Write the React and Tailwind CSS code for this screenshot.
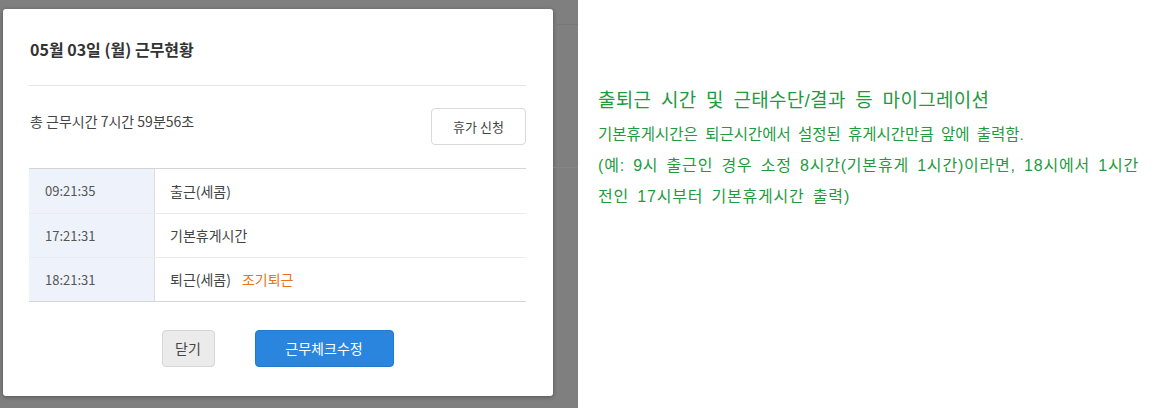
import React from "react";

const rows = [
  { time: "09:21:35", label: "출근(세콤)" },
  { time: "17:21:31", label: "기본휴게시간" },
  { time: "18:21:31", label: "퇴근(세콤)", note: "조기퇴근" },
];

function WorkModal() {
  return (
    <div className="w-[550px] h-[387px] bg-white rounded-[3px] shadow-[0_1px_4px_rgba(0,0,0,0.35)] pl-[26px] pr-[27px] pt-[29px]">
      <h2 className="pl-[1px] text-[16px] leading-[22px] font-bold text-[#333]">05월 03일 (월) 근무현황</h2>
      <div className="mt-[25px] border-t border-[#dfe5ec]" />

      <div className="mt-[22px] flex items-start justify-between">
        <p className="mt-[3px] pl-[1px] text-[14px] leading-[20px] text-[#444]">총 근무시간 7시간 59분56초</p>
        <button className="h-[37px] w-[95px] rounded-[4px] border border-[#d9d9d9] bg-white text-[13px] text-[#444]">
          휴가 신청
        </button>
      </div>

      <div className="mt-[23px] border-t border-b border-[#d4d4d4]">
        {rows.map((r, i) => (
          <div key={r.time} className={`flex h-[44px] ${i > 0 ? "border-t border-[#ececec]" : ""}`}>
            <div className="w-[126px] shrink-0 bg-[#eef3fb] border-r border-[#dcdcdc] flex items-center pl-[16px] text-[13px] text-[#555]">
              {r.time}
            </div>
            <div className="flex items-center pl-[15px] text-[14px] text-[#444]">
              {r.label}
              {r.note && <span className="ml-[11px] text-[#e8731a]">{r.note}</span>}
            </div>
          </div>
        ))}
      </div>

      <div className="mt-[28px] flex justify-center gap-[40px]">
        <button className="h-[37px] w-[53px] rounded-[4px] border border-[#d6d6d6] bg-[#ebebeb] text-[14px] text-[#444]">
          닫기
        </button>
        <button className="h-[37px] w-[139px] rounded-[4px] border border-[#2178cc] bg-[#2a85df] text-[14px] text-white">
          근무체크수정
        </button>
      </div>
    </div>
  );
}

export default function App() {
  return (
    <div
      className="w-[1167px] h-[408px] flex bg-white"
      style={{ fontFamily: '"Noto Sans CJK KR", "Liberation Sans", sans-serif' }}
    >
      {/* dimmed page behind the modal */}
      <div className="w-[578px] h-full bg-[#7f7f7f] flex">
        <div className="pl-[3px] pt-[9px]">
          <WorkModal />
        </div>
        <div className="flex-1 flex flex-col">
          <div className="h-[25px] border-b border-[#777]" />
          <div className="h-[143px] border-b border-[#858585]" />
        </div>
      </div>
      <div
        className="pl-[20px] pt-[87px] text-[#1f9b3f] [word-spacing:3px]"
        style={{ fontFamily: '"Liberation Sans", "Noto Sans CJK KR", sans-serif' }}
      >
        <p className="text-[19px] leading-[28px] [word-spacing:4px] tracking-[0.3px]">출퇴근 시간 및 근태수단/결과 등 마이그레이션</p>
        <p className="mt-[4px] text-[15.5px] leading-[31px]">기본휴게시간은 퇴근시간에서 설정된 휴게시간만큼 앞에 출력함.</p>
        <p className="text-[16px] leading-[31px] tracking-[0.8px]">(예: 9시 출근인 경우 소정 8시간(기본휴게 1시간)이라면, 18시에서 1시간</p>
        <p className="text-[16px] leading-[31px] tracking-[0.8px]">전인 17시부터 기본휴게시간 출력)</p>
      </div>
    </div>
  );
}
